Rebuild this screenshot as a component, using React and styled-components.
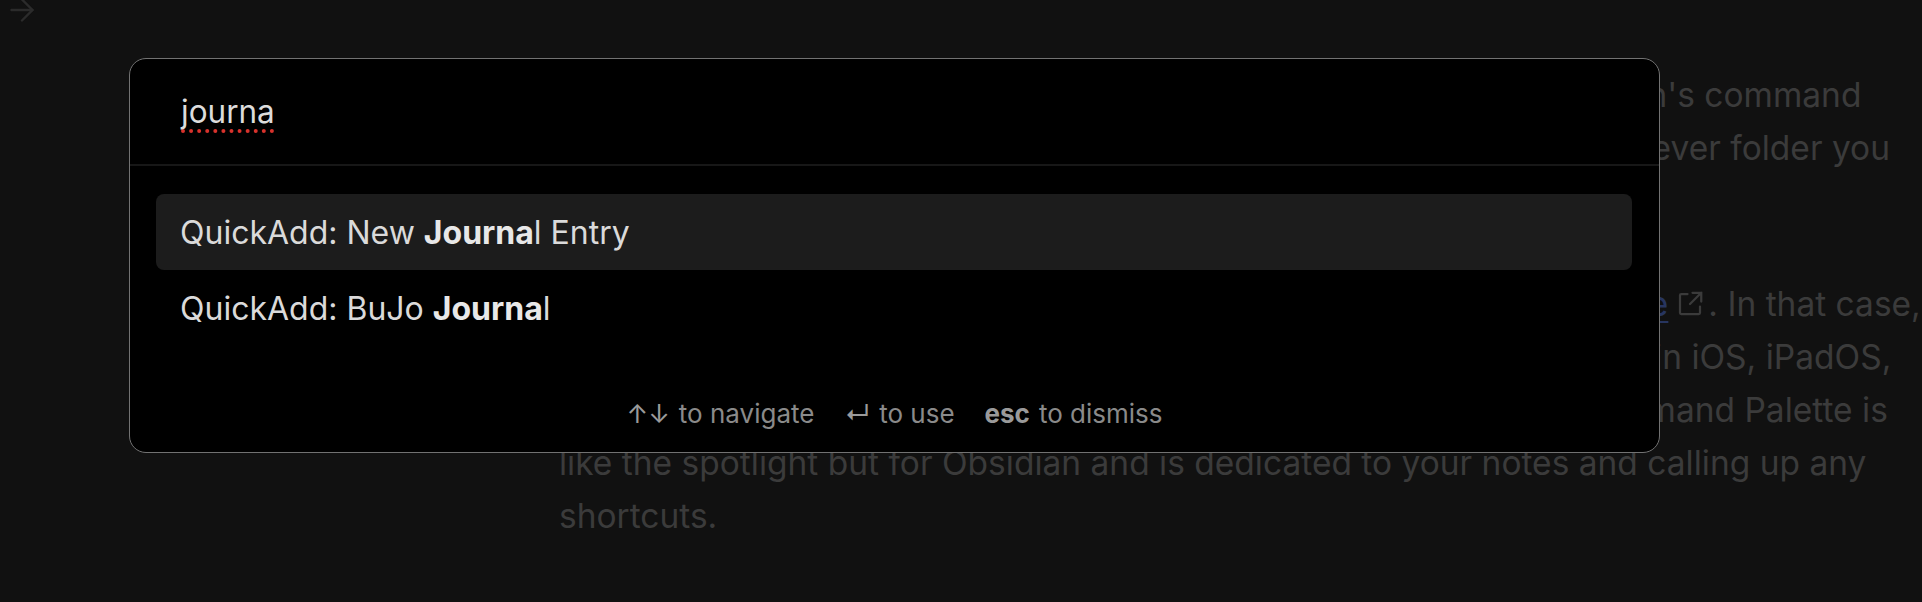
import React from "react"
import styled, { createGlobalStyle } from "styled-components"
import { ArrowRight } from "lucide-react"

const GlobalStyle = createGlobalStyle`
html, body {
  margin: 0;
  padding: 0;
  background: #111111;
}
body {
  font-family: Inter, "Noto Sans", "Liberation Sans", sans-serif;
  -webkit-font-smoothing: antialiased;
}
`

const Page = styled.div`
position: relative;
width: 1922px;
height: 602px;
overflow: hidden;
background: #111111;
display: flex;
flex-direction: column;
`

const NavBar = styled.div`
display: flex;
align-items: center;
height: 20px;
padding-left: 4px;
color: #2b2b2b;
`

const Note = styled.div`
padding: 49px 0 0 559px;
color: #3b3b3b;
font-size: 33.5px;
`

const Paragraph = styled.div`
margin-bottom: ${p => p.$gap || 0}px;
`

const Line = styled.div`
white-space: nowrap;
line-height: 53px;
height: 53px;
`

const Link = styled.span`
color: #27355f;
text-decoration: underline;
text-decoration-thickness: 2px;
text-underline-offset: 5px;
`

const ExtIcon = styled.svg`
width: 30px;
height: 30px;
margin: 0 3px 0 7px;
vertical-align: -3px;
`

// command palette modal
const Modal = styled.div`
position: absolute;
left: 129px;
top: 58px;
width: 1531px;
box-sizing: border-box;
background: #000000;
border: 1.5px solid #727272;
border-radius: 17px;
display: flex;
flex-direction: column;
`

const InputRow = styled.div`
height: 105px;
display: flex;
align-items: center;
padding: 0 51px;
border-bottom: 2px solid #171717;
`

const Query = styled.span`
color: #dcdcdc;
font-size: 31.5px;
text-decoration: underline dotted #d8322c;
text-decoration-thickness: 4px;
text-underline-offset: 6px;
`

const List = styled.div`
padding: 28px 27px 0 26px;
display: flex;
flex-direction: column;
`

const Item = styled.div`
height: 76px;
display: flex;
align-items: center;
padding-left: 24px;
border-radius: 8px;
background: ${p => (p.$active ? "#1c1c1c" : "transparent")};
color: #dadada;
font-size: 32px;
white-space: pre;
b {
  color: #e8e8e8;
  font-weight: 700;
}
`

const Footer = styled.div`
display: flex;
justify-content: center;
gap: 30px;
padding: 53px 0 23px;
color: #8a8a8a;
font-size: 26px;
line-height: 30px;
`

const Hint = styled.span`
display: flex;
align-items: center;
gap: 9px;
`

const Key = styled.span`
color: #9a9a9a;
font-weight: ${p => (p.$bold ? 700 : 400)};
`

const Match = ({ text, hit }) => {
    const i = text.indexOf(hit)
    return (
        <>
            {text.slice(0, i)}
            <b>{hit}</b>
            {text.slice(i + hit.length)}
        </>
    )
}

export default function App() {
    return (
        <Page>
            <GlobalStyle />
            <NavBar>
                <ArrowRight size={36} strokeWidth={1.6} />
            </NavBar>
            <Note>
                <Paragraph $gap={103}>
                    <Line>One of the first things a newcomer will want to learn about is Obsidian's command</Line>
                    <Line>palette, which lets you create a note and run commands within whichever folder you</Line>
                </Paragraph>
                <Paragraph>
                    <Line>
                        If you use a Mac, you might know Spotlight in the Apple support <Link>guide</Link>
                        <ExtIcon viewBox="0 0 24 24" fill="none" stroke="#3b3b3b" strokeWidth="1.8" strokeLinecap="round">
                            <path d="M10 4H5a1 1 0 0 0-1 1v14a1 1 0 0 0 1 1h14a1 1 0 0 0 1-1v-5" />
                            <path d="M14 3h7v7M21 3l-9 9" />
                        </ExtIcon>
                        . In that case,
                    </Line>
                    <Line>you will be familiar with the idea of a universal search features found in iOS, iPadOS,</Line>
                    <Line>and macOS, which is a way to get anything on your device. The Command Palette is</Line>
                    <Line>like the spotlight but for Obsidian and is dedicated to your notes and calling up any</Line>
                    <Line>shortcuts.</Line>
                </Paragraph>
            </Note>

            <Modal>
                <InputRow>
                    <Query>journa</Query>
                </InputRow>
                <List>
                    <Item $active>
                        <Match text="QuickAdd: New Journal Entry" hit="Journa" />
                    </Item>
                    <Item>
                        <Match text="QuickAdd: BuJo Journal" hit="Journa" />
                    </Item>
                </List>
                <Footer>
                    <Hint><Key>↑↓</Key>to navigate</Hint>
                    <Hint><Key>↵</Key>to use</Hint>
                    <Hint><Key $bold>esc</Key>to dismiss</Hint>
                </Footer>
            </Modal>
        </Page>
    )
}
